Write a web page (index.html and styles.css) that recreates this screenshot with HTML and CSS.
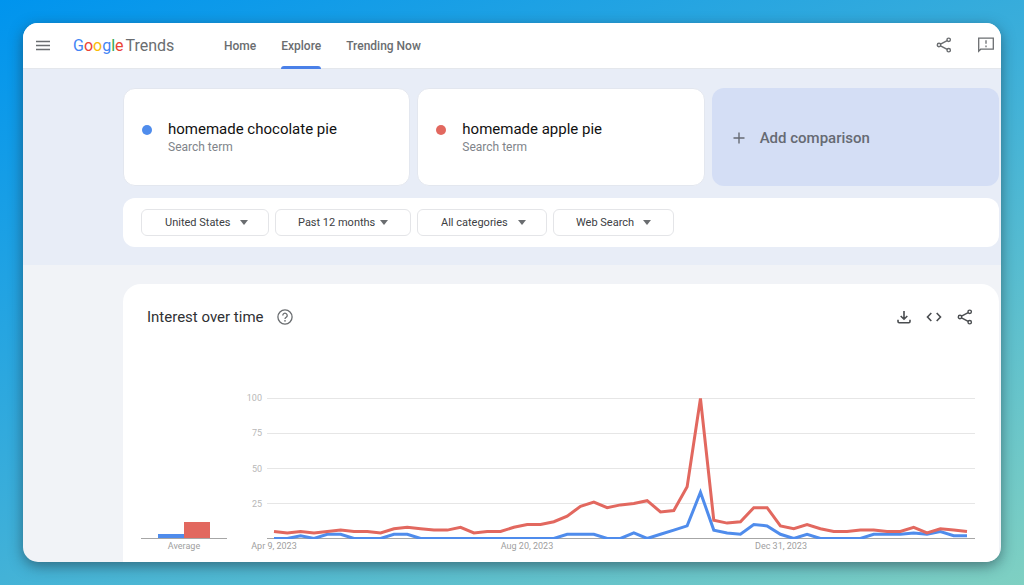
FILE: index.html
```
<!DOCTYPE html>
<html lang="en">
<head>
<meta charset="utf-8">
<meta name="viewport" content="width=device-width, initial-scale=1">
<title>Google Trends - Explore</title>
<link rel="stylesheet" href="styles.css">
</head>
<body>
<svg class="sprite" aria-hidden="true">
  <symbol id="share" viewBox="0 0 16 16">
    <g fill="none" stroke="currentColor" stroke-width="1.4">
      <circle cx="12.7" cy="2.800" r="1.7"/><circle cx="3" cy="8" r="1.7"/><circle cx="12.7" cy="13.200" r="1.7"/>
      <path d="M4.5 7.2 11.200 3.600M4.5 8.8 11.200 12.400"/>
    </g>
  </symbol>
</svg>
<div class="window">
  <header class="topbar">
    <button class="icon-btn menu" aria-label="Main menu">
      <svg width="14" height="12" viewBox="0 0 14 12"><path d="M0 1.500h14M0 5.500h14M0 9.500h14" stroke="currentColor" stroke-width="1.4"/></svg>
    </button>
    <a class="logo" href="#" aria-label="Google Trends"><span class="g-blue">G</span><span class="g-red">o</span><span class="g-yellow">o</span><span class="g-blue">g</span><span class="g-green">l</span><span class="g-red">e</span><span class="trends">Trends</span></a>
    <nav class="nav">
      <a href="#">Home</a>
      <a href="#" class="active" aria-current="page">Explore</a>
      <a href="#">Trending Now</a>
    </nav>
    <div class="top-actions">
      <button class="icon-btn" aria-label="Share"><svg width="16" height="16"><use href="#share"/></svg></button>
      <button class="icon-btn" aria-label="Send feedback">
        <svg width="16" height="16" viewBox="0 0 16 16"><path d="M.7 14.2V1.2h14.6v11H2.7z" fill="none" stroke="currentColor" stroke-width="1.3"/><path d="M8 3.2v3.6M8 8.6v1.6" stroke="currentColor" stroke-width="1.3"/></svg>
      </button>
    </div>
  </header>

  <section class="hero">
    <div class="terms">
      <article class="term">
        <span class="dot blue"></span>
        <div><h2>homemade chocolate pie</h2><p>Search term</p></div>
      </article>
      <article class="term">
        <span class="dot red"></span>
        <div><h2>homemade apple pie</h2><p>Search term</p></div>
      </article>
      <button class="add">
        <svg width="12" height="12" viewBox="0 0 12 12"><path d="M6 .5v11M.5 6h11" stroke="currentColor" stroke-width="1.4"/></svg>
        <span>Add comparison</span>
      </button>
    </div>
    <form class="filters">
      <div class="pill region"><select aria-label="Region"><option>United States</option></select></div>
      <div class="pill period"><select aria-label="Time range"><option>Past 12 months</option></select></div>
      <div class="pill category"><select aria-label="Category"><option>All categories</option></select></div>
      <div class="pill source"><select aria-label="Search type"><option>Web Search</option></select></div>
    </form>
  </section>

  <main class="content">
    <section class="panel">
      <div class="panel-head">
        <h1>Interest over time</h1>
        <button class="icon-btn help" aria-label="Help">
          <svg width="16" height="16" viewBox="0 0 16 16"><circle cx="8" cy="8" r="7.1" fill="none" stroke="currentColor" stroke-width="1.3"/><path d="M5.8 6.4a2.2 2.2 0 1 1 3.5 1.8C8.500 8.800 8 9.100 8 10" fill="none" stroke="currentColor" stroke-width="1.3"/><circle cx="8" cy="11.8" r=".85" fill="currentColor"/></svg>
        </button>
        <div class="panel-actions">
          <button class="icon-btn" aria-label="Download CSV"><svg width="14" height="14" viewBox="0 0 14 14"><path d="M7 1v8M3.700 6 7 9.200 10.300 6M1 9.800V11.500Q1 12.700 2.200 12.700H11.800Q13 12.700 13 11.500V9.800" fill="none" stroke="currentColor" stroke-width="1.6"/></svg></button>
          <button class="icon-btn" aria-label="Embed"><svg width="16" height="14" viewBox="0 0 16 14"><path d="M5.300 3 1.500 7l3.800 4M10.700 3l3.800 4-3.800 4" fill="none" stroke="currentColor" stroke-width="1.600"/></svg></button>
          <button class="icon-btn" aria-label="Share chart"><svg width="16" height="16"><use href="#share"/></svg></button>
        </div>
      </div>
      <div class="charts">
        <svg class="average" viewBox="0 0 86 160" role="img" aria-label="Average interest">
          <rect class="fill-blue" x="17" y="142" width="26" height="5"/>
          <rect class="fill-red" x="43" y="130" width="26" height="17"/>
          <path class="axis" d="M0 146.500H86"/>
          <text class="date" x="43" y="157" text-anchor="middle">Average</text>
        </svg>
        <svg class="timeline" viewBox="0 0 730 160" role="img" aria-label="Interest over time">
          <defs><clipPath id="plot"><rect x="22" y="6" width="708" height="141"/></clipPath></defs>
          <path class="grid" d="M22 6.500H730M22 41.500H730M22 76.500H730M22 111.500H730"/>
          <path class="axis" d="M22 146.500H730"/>
          <g class="scale" text-anchor="end">
            <text x="17" y="9">100</text><text x="17" y="44">75</text><text x="17" y="80">50</text><text x="17" y="115">25</text>
          </g>
          <g id="series" clip-path="url(#plot)"></g>
          <g class="date" text-anchor="middle">
            <text x="29" y="157">Apr 9, 2023</text><text x="282" y="157">Aug 20, 2023</text><text x="536" y="157">Dec 31, 2023</text>
          </g>
        </svg>
      </div>
    </section>
  </main>
</div>
<script src="chart.js"></script>
</body>
</html>
```
FILE: styles.css
```
:root {
  --blue: #4f8cec;
  --red: #e2685f;
  --grey: #6a6d70;
  --sans: Roboto, "Open Sans", sans-serif;
}
* { box-sizing: border-box; }
body {
  margin: 0;
  min-height: 100vh;
  padding: 23px;
  display: flex;
  font-family: var(--sans);
  color: #1f1f1f;
  background: linear-gradient(155deg, #0094ee 0%, #3dafd9 50%, #7fd0c2 100%);
}
h1, h2, p { margin: 0; font-weight: 400; }
a { text-decoration: none; color: inherit; }
button, select { font: inherit; color: inherit; border: 0; background: none; padding: 0; }
button svg { display: block; }
.sprite { display: none; }
.window {
  flex: 1;
  display: flex;
  flex-direction: column;
  overflow: hidden;
  border-radius: 15px;
  background: #f1f3f7;
  box-shadow: 0 4px 14px rgba(30, 50, 60, .55);
}
.topbar {
  height: 46px;
  flex: none;
  display: flex;
  align-items: center;
  padding: 0 7px 0 13px;
  background: #fff;
  border-bottom: 1px solid #e4e7ec;
  color: var(--grey);
}
.logo { display: flex; align-items: center; margin-left: 23px; width: 151px; font-size: 16px; }
.g-blue { color: #4285f4; }
.g-red { color: #ea4335; }
.g-yellow { color: #fbbc05; }
.g-green { color: #34a853; }
.trends { margin-left: 2px; }
.nav { display: flex; gap: 25px; align-self: stretch; font-size: 12px; font-weight: 500; }
.nav a { display: flex; align-items: center; }
.nav .active { position: relative; }
.nav .active::after {
  content: "";
  position: absolute;
  left: 0;
  right: 0;
  bottom: -1px;
  height: 3px;
  border-radius: 3px 3px 0 0;
  background: #4a80e8;
}
.top-actions { display: flex; gap: 26px; margin-left: auto; padding-bottom: 2px; }
.hero {
  flex: none;
  padding: 19px 2px 18px 100px;
  background: #e8edf7;
}
.terms { display: grid; grid-template-columns: repeat(3, 1fr); gap: 7px; }
.term, .add { height: 98px; border-radius: 12px; }
.term {
  display: flex;
  align-items: center;
  gap: 16px;
  padding: 0 18px;
  background: #fff;
  border: 1px solid #e3e7ef;
}
.term h2 { font-size: 15px; line-height: 20px; color: #111; }
.term p { font-size: 12px; line-height: 16px; color: #80848a; }
.dot { width: 10px; height: 10px; border-radius: 50%; margin-bottom: 14px; }
.dot.blue { background: var(--blue); }
.dot.red { background: var(--red); }
.add {
  display: flex;
  align-items: center;
  gap: 15px;
  padding: 2px 21px 0;
  background: #d4def5;
  color: #666a73;
  font-size: 15px;
  font-weight: 500;
}
.filters {
  display: flex;
  gap: 6px;
  margin-top: 12px;
  padding: 11px 18px;
  border-radius: 12px;
  background: #fff;
}
.pill {
  display: flex;
  align-items: center;
  height: 27px;
  padding: 0 20px 0 23px;
  border: 1px solid #e4e5e8;
  border-radius: 6px;
  color: #3c4043;
  font-size: 11px;
}
.period, .source { padding-right: 22px; padding-left: 22px; }
.pill select { flex: 1; min-width: 0; appearance: none; }
.pill::after {
  content: "";
  border: 4px solid transparent;
  border-top: 5px solid #6a6d70;
  border-bottom: 0;
}
.region { width: 128px; }
.period { width: 136px; }
.category { width: 130px; }
.source { width: 121px; }
.content { flex: 1; display: flex; padding: 19px 2px 0 100px; }
.panel { flex: 1; padding: 24px 24px 0 18px; border-radius: 18px 18px 0 0; background: #fff; }
.panel-head { display: flex; align-items: center; padding-left: 6px; height: 18px; }
.panel-head h1 { font-size: 15px; color: #303134; }
.help { margin-left: 13px; color: #6a6d70; }
.panel-actions { display: flex; align-items: center; gap: 15px; margin-left: auto; padding-right: 2px; color: #4a4d50; }
.charts { display: grid; grid-template-columns: 86fr 730fr; gap: 18px; margin-top: 66px; }
.charts svg { display: block; width: 100%; height: auto; font-family: Roboto, sans-serif; font-size: 9px; }
.grid, .axis { fill: none; stroke: #e6e6e6; }
.axis { stroke: #a6a6a6; }
.scale { fill: #b8b8b8; }
.date { fill: #a0a0a0; }
.fill-blue { fill: var(--blue); }
.fill-red { fill: var(--red); }
.line { fill: none; stroke-width: 3; }
.line.blue { stroke: var(--blue); }
.line.red { stroke: var(--red); }
```
FILE: chart.js
```
const terms = {
  blue: [0,0,2,0,3,3,0,0,0,3,3,0,0,0,0,0,0,0,0,0,0,0,3,3,3,0,0,4,0,3,6,9,33,6,4,3,10,9,3,0,3,0,0,0,0,3,3,3,4,3,5,2,2],
  red: [5,4,5,4,5,6,5,5,4,7,8,7,6,6,8,4,5,5,8,10,10,12,16,23,26,22,24,25,27,19,20,37,100,13,11,12,22,22,9,7,10,7,5,5,6,6,5,5,8,4,7,6,5]
};
const group = document.getElementById("series");
for (const [name, values] of Object.entries(terms)) {
  const line = document.createElementNS("http://www.w3.org/2000/svg", "polyline");
  line.setAttribute("class", "line " + name);
  line.setAttribute("points", values.map((v, i) => [29 + i * 693 / 52, 146.5 - v * 1.4].join(",")).join(" "));
  group.append(line);
}
```
